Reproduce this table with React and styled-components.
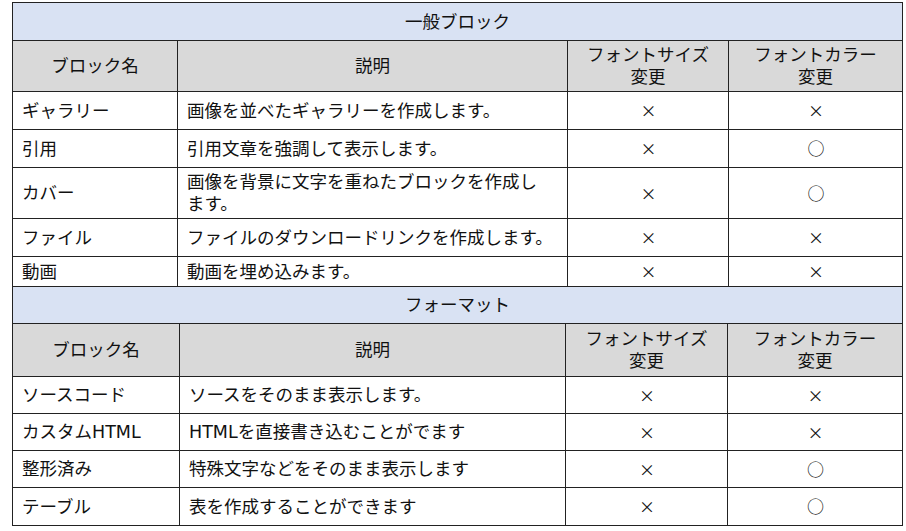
import React from 'react';
import styled, {createGlobalStyle} from 'styled-components';

const GlobalStyle = createGlobalStyle`
    html, body {
        margin: 0;
        padding: 0;
        background: #ffffff;
    }
    body {
        font-family: "DejaVu Sans", "Noto Sans CJK JP", sans-serif;
        color: #111;
    }
`

const Page = styled.div`
    padding: 2px 4px 0 12px;
    width: 890px;
`

const Table = styled.table`
    width: 890px;
    table-layout: fixed;
    border-collapse: collapse;
    font-size: 17.5px;
    line-height: 22px;
    & + & {
        margin-top: -1px;
    }
`

const Row = styled.tr`
    height: ${({h}) => h}px;
`

const TitleCell = styled.th`
    background: #d9e2f3;
    border: 1px solid #222;
    font-weight: normal;
    text-align: center;
    padding: 0;
`

const HeadCell = styled.th`
    background: #d9d9d9;
    border: 1px solid #222;
    font-weight: normal;
    text-align: center;
    padding: 0 6px;
`

const Cell = styled.td`
    border: 1px solid #222;
    padding: 0 ${({wide}) => (wide ? 14 : 8)}px 0 9px;
    text-align: ${({center}) => (center ? 'center' : 'left')};
    vertical-align: middle;
`

const Mark = styled.span`
    font-family: "Noto Sans CJK JP", sans-serif;
    font-size: ${({circle}) => (circle ? '17px' : '16px')};
`

const general = [
    {name: 'ギャラリー', desc: '画像を並べたギャラリーを作成します。', size: false, color: false, h: 38},
    {name: '引用', desc: '引用文章を強調して表示します。', size: false, color: true, h: 38},
    {name: 'カバー', desc: '画像を背景に文字を重ねたブロックを作成します。', size: false, color: true, h: 51},
    {name: 'ファイル', desc: 'ファイルのダウンロードリンクを作成します。', size: false, color: false, h: 38},
    {name: '動画', desc: '動画を埋め込みます。', size: false, color: false, h: 30},
];

const format = [
    {name: 'ソースコード', desc: 'ソースをそのまま表示します。', size: false, color: false, h: 37},
    {name: 'カスタムHTML', desc: 'HTMLを直接書き込むことがでます', size: false, color: false, h: 37},
    {name: '整形済み', desc: '特殊文字などをそのまま表示します', size: false, color: true, h: 37},
    {name: 'テーブル', desc: '表を作成することができます', size: false, color: true, h: 38},
];

function Flag({on}) {
    return on ? <Mark circle>○</Mark> : <Mark>×</Mark>;
}

function BlockTable({title, rows, cols, titleH, headH}) {
    return (
        <Table>
            <colgroup>
                {cols.map((w, i) => <col key={i} style={{width: w}} />)}
            </colgroup>
            <thead>
                <Row h={titleH}>
                    <TitleCell colSpan={4}>{title}</TitleCell>
                </Row>
                <Row h={headH}>
                    <HeadCell>ブロック名</HeadCell>
                    <HeadCell>説明</HeadCell>
                    <HeadCell>フォントサイズ<br />変更</HeadCell>
                    <HeadCell>フォントカラー<br />変更</HeadCell>
                </Row>
            </thead>
            <tbody>
                {rows.map((r) => (
                    <Row h={r.h} key={r.name}>
                        <Cell>{r.name}</Cell>
                        <Cell wide>{r.desc}</Cell>
                        <Cell center><Flag on={r.size} /></Cell>
                        <Cell center><Flag on={r.color} /></Cell>
                    </Row>
                ))}
            </tbody>
        </Table>
    );
}

export default function App() {
    return (
        <Page>
            <GlobalStyle />
            <BlockTable title="一般ブロック" rows={general} cols={[165, 390, 161, 174]} titleH={38} headH={51} />
            <BlockTable title="フォーマット" rows={format} cols={[167, 386, 162, 175]} titleH={37} headH={53} />
        </Page>
    );
}
